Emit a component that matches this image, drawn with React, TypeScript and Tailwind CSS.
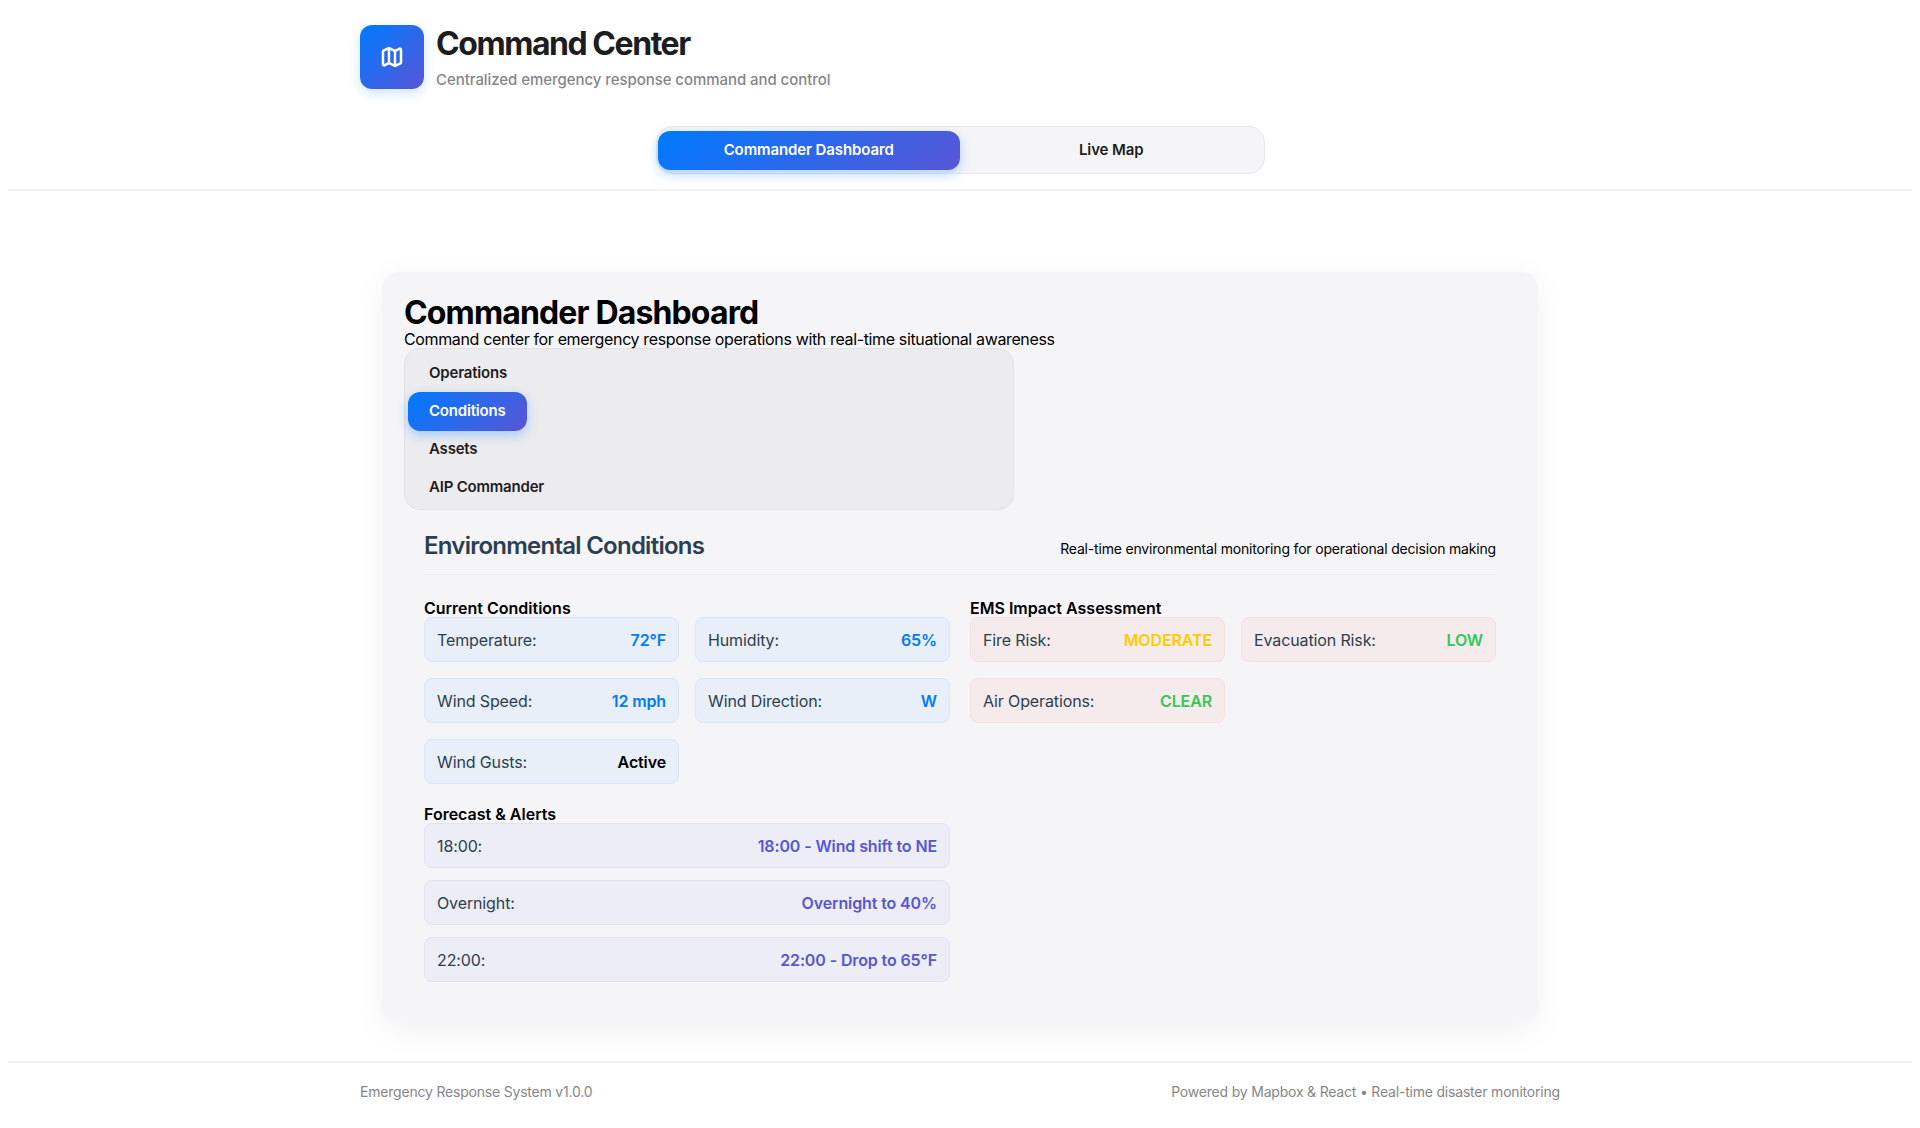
import { Map } from "lucide-react";

const currentConditions = [
  { label: "Temperature:", value: "72°F", color: "text-[#007aff]" },
  { label: "Humidity:", value: "65%", color: "text-[#007aff]" },
  { label: "Wind Speed:", value: "12 mph", color: "text-[#007aff]" },
  { label: "Wind Direction:", value: "W", color: "text-[#007aff]" },
  { label: "Wind Gusts:", value: "Active", color: "text-black" },
];

const emsImpact = [
  { label: "Fire Risk:", value: "MODERATE", color: "text-[#ffcc00]" },
  { label: "Evacuation Risk:", value: "LOW", color: "text-[#34c759]" },
  { label: "Air Operations:", value: "CLEAR", color: "text-[#34c759]" },
];

const forecast = [
  { label: "18:00:", value: "18:00 - Wind shift to NE" },
  { label: "Overnight:", value: "Overnight to 40%" },
  { label: "22:00:", value: "22:00 - Drop to 65°F" },
];

const subTabs = ["Operations", "Conditions", "Assets", "AIP Commander"];

function StatRow({
  label,
  value,
  valueClass,
  boxClass,
}: {
  label: string;
  value: string;
  valueClass: string;
  boxClass: string;
}) {
  return (
    <div className={`flex h-[45px] items-center justify-between rounded-lg border px-3 text-base tracking-[-0.12px] ${boxClass}`}>
      <span className="font-normal text-[#2c3e50]">{label}</span>
      <span className={`font-semibold ${valueClass}`}>{value}</span>
    </div>
  );
}

export default function App() {
  return (
    <div className="min-h-[1128px] bg-white font-['Inter',sans-serif] text-black">
      <header className="mx-2 h-[191px] border-b-2 border-[#f2f2f4]">
        <div className="mx-auto w-[1200px]">
          <div className="flex items-start gap-3 pt-[25px]">
            <div className="flex h-16 w-16 items-center justify-center rounded-xl bg-[linear-gradient(135deg,#007aff,#5856d6)] shadow-[0_4px_12px_rgba(0,122,255,0.2)]">
              <Map className="h-6 w-6 text-white" strokeWidth={2.5} />
            </div>
            <div>
              <h1 className="text-[32px] leading-[38px] font-bold tracking-[-1.45px] text-[#1d1d1f]">
                Command Center
              </h1>
              <p className="mt-[8px] text-[15px] leading-[18px] font-medium tracking-[-0.06px] text-[#86868b]">
                Centralized emergency response command and control
              </p>
            </div>
          </div>
          <div className="mt-[37px] flex justify-center">
            <div className="flex h-[48px] w-[609px] items-center rounded-2xl border border-[#e8e8ec] bg-[#f5f5f7] px-[1px]">
              <button className="h-[39px] flex-1 rounded-xl bg-[linear-gradient(135deg,#007aff,#5856d6)] text-[15px] font-semibold tracking-[-0.1px] text-white shadow-[0_4px_12px_rgba(0,122,255,0.3)]">
                Commander Dashboard
              </button>
              <button className="h-[39px] flex-1 rounded-xl text-[15px] font-semibold tracking-[-0.1px] text-[#1d1d1f]">
                Live Map
              </button>
            </div>
          </div>
        </div>
      </header>

      <main className="mx-auto mt-[81px] w-[1156px] rounded-2xl bg-[#f5f5f7] px-[22px] pt-[22px] pb-10 shadow-[0_8px_32px_rgba(0,0,0,0.06)]">
        <h2 className="text-[32px] leading-[37px] font-bold tracking-[-0.86px]">Commander Dashboard</h2>
        <p className="text-base leading-[17px] tracking-[-0.36px]">
          Command center for emergency response operations with real-time situational awareness
        </p>
        <nav className="flex h-[162px] w-[610px] flex-col items-start justify-center rounded-2xl border border-[#e2e2e6] bg-[#ececef] px-[3px] pt-[3px]">
          {subTabs.map((tab) =>
            tab === "Conditions" ? (
              <button
                key={tab}
                className="relative h-[39px] w-[119px] shrink-0 -my-[0.5px] rounded-xl bg-[linear-gradient(135deg,#007aff,#5856d6)] pr-5 pl-[21px] text-left text-[15px] font-semibold tracking-[-0.2px] text-white shadow-[0_4px_12px_rgba(0,122,255,0.3)]"
              >
                {tab}
              </button>
            ) : (
              <button
                key={tab}
                className="h-[38px] shrink-0 rounded-xl pr-5 pl-[21px] text-left text-[15px] font-semibold tracking-[-0.2px] text-[#1d1d1f]"
              >
                {tab}
              </button>
            )
          )}
        </nav>

        <section className="px-5 pt-[22px]">
          <div className="flex h-[43px] items-start justify-between border-b border-[#efeff2]">
            <h3 className="text-2xl leading-[28px] font-semibold tracking-[-0.75px] text-[#2c3e50]">Environmental Conditions</h3>
            <p className="pt-[8px] text-sm leading-[17px] tracking-[-0.18px]">Real-time environmental monitoring for operational decision making</p>
          </div>

          <div className="mt-6 grid grid-cols-2 items-start gap-x-5">
            <div>
              <h4 className="text-base leading-[18px] font-semibold">Current Conditions</h4>
              <div className="grid grid-cols-2 gap-4">
                {currentConditions.map((item) => (
                  <StatRow
                    key={item.label}
                    label={item.label}
                    value={item.value}
                    valueClass={item.color}
                    boxClass="border-[#d9e6fa] bg-[#e8eff8]"
                  />
                ))}
              </div>
            </div>
            <div>
              <h4 className="text-base leading-[18px] font-semibold">EMS Impact Assessment</h4>
              <div className="grid grid-cols-2 gap-4">
                {emsImpact.map((item) => (
                  <StatRow
                    key={item.label}
                    label={item.label}
                    value={item.value}
                    valueClass={item.color}
                    boxClass="border-[#f5dfe0] bg-[#f6ebec]"
                  />
                ))}
              </div>
            </div>
            <div className="mt-[21px]">
              <h4 className="text-base leading-[18px] font-semibold">Forecast &amp; Alerts</h4>
              <div className="flex flex-col gap-3">
                {forecast.map((item) => (
                  <StatRow
                    key={item.label}
                    label={item.label}
                    value={item.value}
                    valueClass="text-[#5856d6]"
                    boxClass="border-[#e3e3f6] bg-[#ecedf6]"
                  />
                ))}
              </div>
            </div>
          </div>
        </section>
      </main>

      <footer className="mx-2 mt-[39px] border-t-2 border-[#f2f2f4]">
        <div className="mx-auto flex w-[1200px] justify-between pt-5 pb-5 text-sm leading-[17px] tracking-[-0.2px] text-[#86868b]">
          <span>Emergency Response System v1.0.0</span>
          <span>Powered by Mapbox &amp; React • Real-time disaster monitoring</span>
        </div>
      </footer>
    </div>
  );
}
